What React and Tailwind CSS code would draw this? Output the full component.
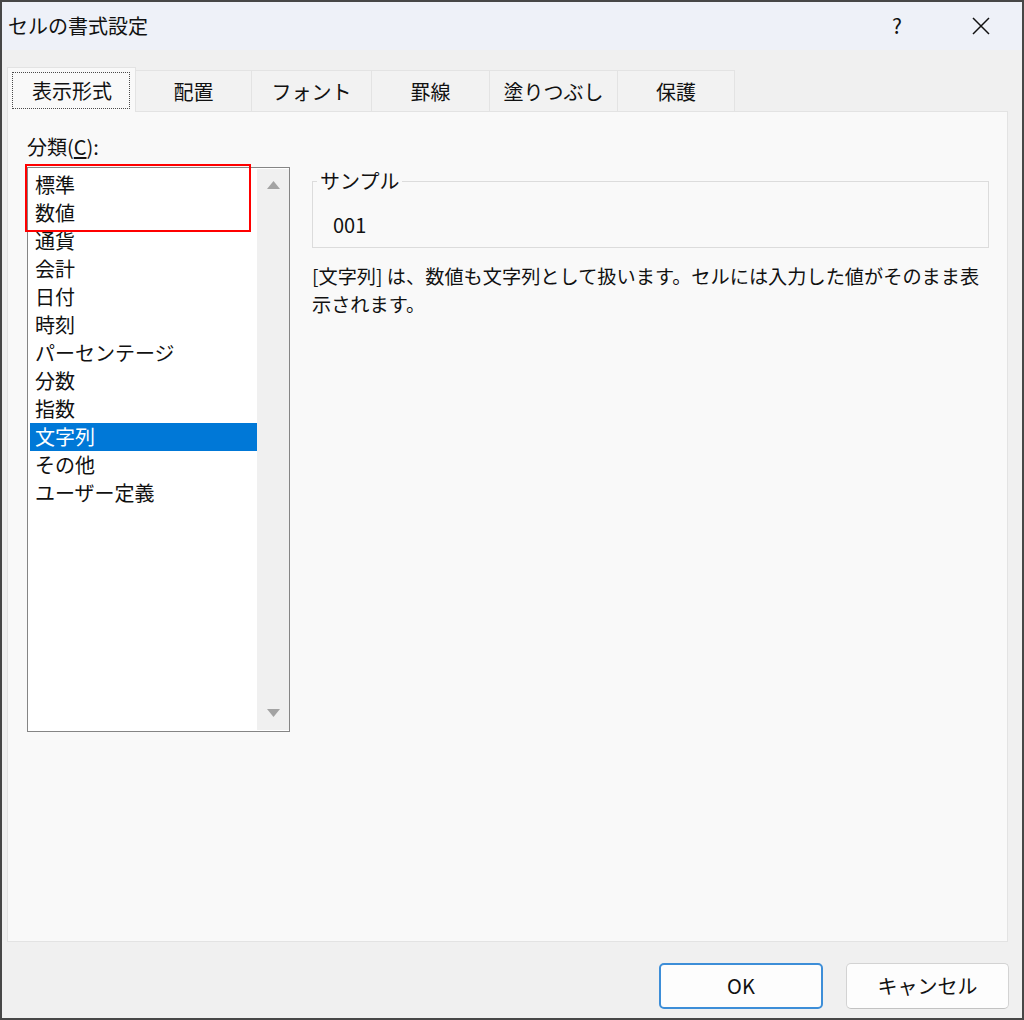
import React from 'react'

const TABS = [
  { label: '配置', width: 'w-[116px]' },
  { label: 'フォント', width: 'w-[120px]' },
  { label: '罫線', width: 'w-[118px]' },
  { label: '塗りつぶし', width: 'w-[128px]' },
  { label: '保護', width: 'w-[117px]' },
]

const CATEGORIES = [
  '標準',
  '数値',
  '通貨',
  '会計',
  '日付',
  '時刻',
  'パーセンテージ',
  '分数',
  '指数',
  '文字列',
  'その他',
  'ユーザー定義',
]

const SELECTED = '文字列'

function TitleBar() {
  return (
    <div className="h-[48px] shrink-0 bg-[#eef1f8] flex items-center pl-[6px]">
      <span className="text-[20px] leading-none">セルの書式設定</span>
      <div className="ml-auto flex items-center pr-[18px]">
        <span className="w-[46px] text-center text-[21px]">?</span>
        <span className="w-[46px] ml-[38px] flex items-center justify-center">
          <svg width="20" height="20" viewBox="0 0 20 20">
            <path d="M2 2 L18 18 M18 2 L2 18" stroke="#111" strokeWidth="1.5" fill="none" />
          </svg>
        </span>
      </div>
    </div>
  )
}

function Tabs() {
  return (
    <div className="ml-[5px] mt-[17px] h-[44px] flex items-end">
      <div className="relative z-10 -mb-[1px] w-[129px] h-[45px] bg-[#f9f9f9] border-l border-t border-r border-[#e3e3e3] pl-[4px] pr-[5px] pt-[4px] pb-[3px]">
        <div className="h-full border border-dotted border-[#4a4a4a] flex items-center justify-center text-[20px] pl-[2px]">
          表示形式
        </div>
      </div>
      {TABS.map((tab) => (
        <div
          key={tab.label}
          className={`${tab.width} h-[41px] bg-[#f2f2f2] border-t border-r border-[#e3e3e3] flex items-center justify-center text-[20px] pt-[2px]`}
        >
          {tab.label}
        </div>
      ))}
    </div>
  )
}

function CategoryList() {
  return (
    <div className="relative mt-[8px] h-[565px] border border-[#858585] bg-white flex">
      <div className="flex-1 pt-[3px] pl-[2px]">
        {CATEGORIES.map((item) => (
          <div
            key={item}
            className={
              item === SELECTED
                ? 'h-[28px] leading-[28px] pl-[5px] text-[20px] bg-[#0078d7] text-white'
                : 'h-[28px] leading-[28px] pl-[5px] text-[20px]'
            }
          >
            {item}
          </div>
        ))}
      </div>
      <div className="w-[32px] my-[1px] bg-[#f0f0f0] flex flex-col items-center justify-between pt-[12px] pb-[13px]">
        <svg width="13" height="8" viewBox="0 0 13 8">
          <polygon points="6.5,0 13,8 0,8" fill="#a3a3a3" />
        </svg>
        <svg width="13" height="8" viewBox="0 0 13 8">
          <polygon points="0,0 13,0 6.5,8" fill="#a3a3a3" />
        </svg>
      </div>
      {/* annotation box */}
      <div className="absolute -left-[3px] -top-[4px] w-[226px] h-[68px] border-2 border-[#ff0000] pointer-events-none" />
    </div>
  )
}

function SamplePane() {
  return (
    <div className="ml-[22px] mt-[34px] w-[677px]">
      <fieldset className="border border-[#dcdcdc]">
        <legend className="ml-[4px] px-[3px] text-[20px] leading-[24px]">サンプル</legend>
        <div className="pl-[20px] pt-[20px] pb-[10px] text-[20px] leading-[24px]">001</div>
      </fieldset>
      <p className="mt-[14px] text-[19.2px] leading-[28px] whitespace-nowrap">
        [文字列] は、数値も文字列として扱います。セルには入力した値がそのまま表
        <br />
        示されます。
      </p>
    </div>
  )
}

export default function App() {
  return (
    <div className="w-[1024px] h-[1020px] border-2 border-[#474747] bg-[#f0f0f0] flex flex-col text-[#111] font-['Noto_Sans_CJK_JP',sans-serif]">
      <TitleBar />
      <Tabs />
      <div className="ml-[5px] w-[1001px] h-[831px] shrink-0 border border-[#e3e3e3] bg-[#f9f9f9] flex items-start pt-[23px] pl-[19px]">
        <div className="w-[263px]">
          <div className="text-[20px] leading-[24px]">
            分類(<span className="underline underline-offset-2">C</span>):
          </div>
          <CategoryList />
        </div>
        <SamplePane />
      </div>
      <div className="mt-[21px] flex justify-end gap-[23px] pr-[13px]">
        <button className="w-[164px] h-[46px] rounded-[5px] border-2 border-[#3d8ed8] bg-[#fdfdfd] text-[20px]">
          OK
        </button>
        <button className="w-[163px] h-[46px] rounded-[5px] border border-[#d3d3d3] border-b-[#c2c2c2] bg-[#fdfdfd] text-[20px]">
          キャンセル
        </button>
      </div>
    </div>
  )
}
